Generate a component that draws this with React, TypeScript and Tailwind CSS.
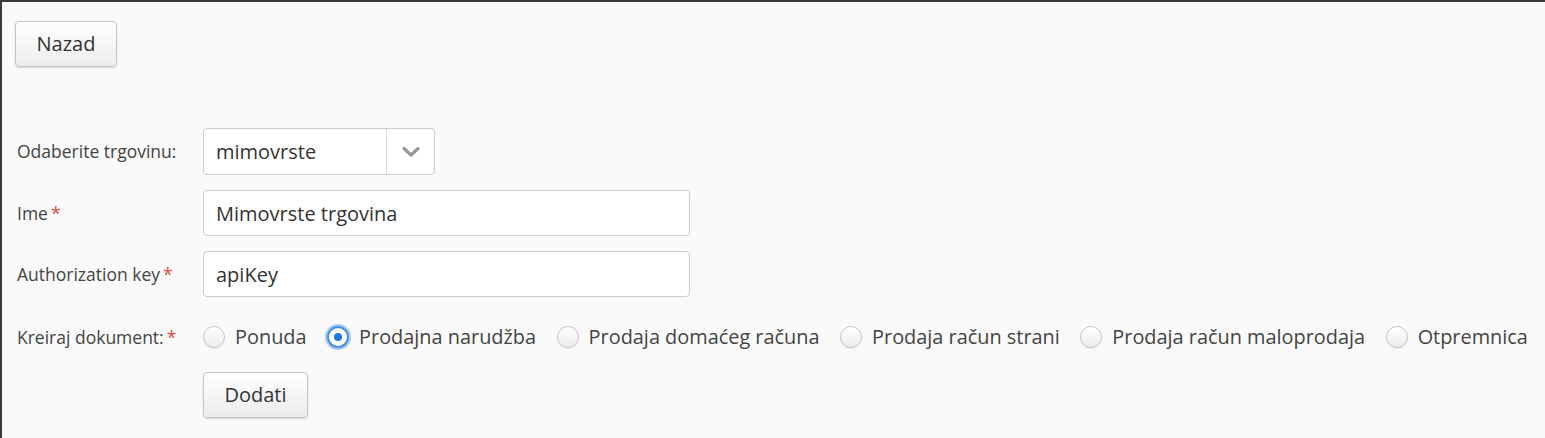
import { useState } from "react";

const options = [
  "Ponuda",
  "Prodajna narudžba",
  "Prodaja domaćeg računa",
  "Prodaja račun strani",
  "Prodaja račun maloprodaja",
  "Otpremnica",
];

function Btn({ children, className = "" }: { children: React.ReactNode; className?: string }) {
  return (
    <button
      className={`h-[46px] rounded-[4px] border border-[#c4c4c4] bg-gradient-to-b from-white to-[#ececec] text-[20px] text-[#333] shadow-[0_1px_2px_rgba(0,0,0,0.15)] ${className}`}
    >
      {children}
    </button>
  );
}

function Req() {
  return <span className="ml-[3px] text-[#e74c3c]">*</span>;
}

export default function App() {
  const [doc, setDoc] = useState("Prodajna narudžba");

  return (
    <div
      className="h-[438px] w-[1545px] overflow-hidden border-l-2 border-t-2 border-[#3a3a3a] bg-[#fafafa] text-[#444]"
      style={{ fontFamily: '"Open Sans", "Liberation Sans", sans-serif' }}
    >
      <div className="pl-[13px] pt-[19px]">
        <Btn className="w-[102px]">Nazad</Btn>
      </div>

      <div className="mt-[61px] flex flex-col pl-[15px]">
        {/* Trgovina */}
        <div className="flex items-center">
          <label className="w-[186px] text-[17.5px]">Odaberite trgovinu:</label>
          <div className="flex h-[47px] w-[232px] items-center rounded-[4px] border border-[#ccc] bg-white">
            <span className="flex-1 pl-[12px] text-[20px] text-[#333]">mimovrste</span>
            <div className="flex h-full w-[48px] items-center justify-center border-l border-[#ddd]">
              <svg width="18" height="12" viewBox="0 0 18 12">
                <path d="M2 2.5 L9 9 L16 2.5" fill="none" stroke="#999" strokeWidth="3.2" strokeLinecap="round" strokeLinejoin="round" />
              </svg>
            </div>
          </div>
        </div>

        {/* Ime */}
        <div className="mt-[15px] flex items-center">
          <label className="w-[186px] text-[17.5px]">
            Ime
            <Req />
          </label>
          <input
            defaultValue="Mimovrste trgovina"
            className="h-[46px] w-[487px] rounded-[4px] border border-[#ccc] bg-white px-[12px] text-[20px] text-[#333] outline-none"
          />
        </div>

        {/* Authorization key */}
        <div className="mt-[15px] flex items-center">
          <label className="w-[186px] text-[17.5px]">
            Authorization key
            <Req />
          </label>
          <input
            defaultValue="apiKey"
            className="h-[46px] w-[487px] rounded-[4px] border border-[#ccc] bg-white px-[12px] text-[20px] text-[#333] outline-none"
          />
        </div>

        {/* Kreiraj dokument */}
        <div className="mt-[25px] flex items-center">
          <label className="w-[186px] text-[17.5px]">
            Kreiraj dokument:
            <Req />
          </label>
          <div className="flex items-center gap-[20.5px]">
            {options.map(o => {
              const checked = doc === o;
              return (
                <label key={o} className="flex cursor-pointer items-center gap-[10px]" onClick={() => setDoc(o)}>
                  {checked ? (
                    <span className="flex h-[22px] w-[22px] items-center justify-center rounded-full border-2 border-[#4a90e2] bg-white shadow-[0_0_0_2px_rgba(74,144,226,0.45)]">
                      <span className="h-[8px] w-[8px] rounded-full bg-[#1e7ae0]" />
                    </span>
                  ) : (
                    <span className="h-[22px] w-[22px] rounded-full border border-[#c8c8c8] bg-gradient-to-b from-white to-[#ececec] shadow-[0_1px_1px_rgba(0,0,0,0.08)]" />
                  )}
                  <span className="text-[19.9px] text-[#444]">{o}</span>
                </label>
              );
            })}
          </div>
        </div>

        <div className="mt-[20px] pl-[186px]">
          <Btn className="w-[105px]">Dodati</Btn>
        </div>
      </div>
    </div>
  );
}
